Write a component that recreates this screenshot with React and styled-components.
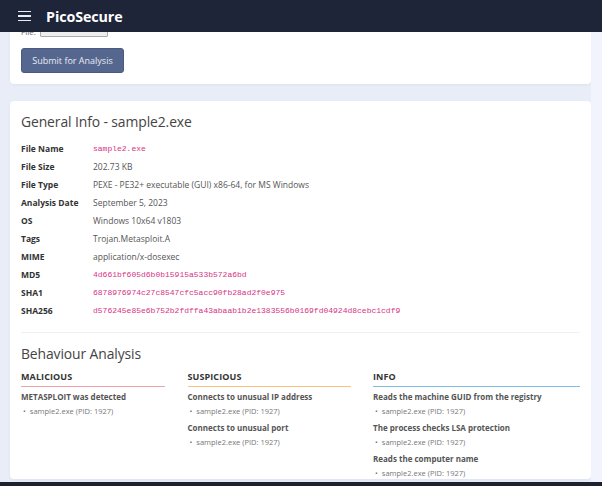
import styled, { createGlobalStyle } from "styled-components";

const GlobalStyle = createGlobalStyle`
  html, body {
    margin: 0;
    padding: 0;
    background: #e9edf7;
    font-family: "Open Sans", "Noto Sans", sans-serif;
    color: #444;
    overflow: hidden;
  }
`;

// header
const TopBar = styled.header`
  position: fixed;
  top: 0;
  left: 0;
  right: 0;
  height: 32px;
  display: flex;
  align-items: center;
  background: #1e2539;
  color: #fff;
  z-index: 10;
`;

const Burger = styled.button`
  display: flex;
  flex-direction: column;
  justify-content: space-between;
  width: 13px;
  height: 11px;
  margin: 0 15px 0 18px;
  padding: 0;
  border: none;
  background: none;

  span {
    display: block;
    height: 1.3px;
    background: #e9ecf2;
  }
`;

const Brand = styled.div`
  font-size: 14.3px;
  font-weight: 700;
  letter-spacing: -0.1px;
`;

const BottomBar = styled.div`
  position: fixed;
  left: 0;
  right: 0;
  bottom: 0;
  height: 4px;
  background: #1d2130;
  z-index: 10;
`;

// page
const Page = styled.div`
  display: flex;
  height: 486px;
`;

const Main = styled.main`
  flex: 1;
  display: flex;
  flex-direction: column;
  gap: 17px;
  padding: 13px 0 0 10px;
`;

const Track = styled.div`
  width: 11px;
  background: #f1f4fd;
`;

const Card = styled.section`
  background: #fff;
  border-radius: 4px;
  box-shadow: 0 1px 3px rgba(40, 60, 110, 0.06);
  padding: ${(p) => p.pad || "11px"};
`;

const FileRow = styled.div`
  display: flex;
  align-items: center;
  gap: 4px;
  height: 14px;
  font-size: 8px;
  color: #666;
`;

const FakeInput = styled.span`
  display: inline-block;
  width: 66px;
  height: 10px;
  border: 1px solid #aaa;
  background: #eee;
  border-radius: 1px;
`;

const Submit = styled.button`
  margin-top: 10px;
  width: 103px;
  height: 25px;
  border: 1px solid #4a5a80;
  border-radius: 3px;
  background: #56678f;
  color: #e8ecf4;
  font-family: inherit;
  font-size: 9px;
`;

const Title = styled.h2`
  margin: 0;
  font-size: 13.9px;
  font-weight: 400;
  color: #444;
  line-height: 20px;
  letter-spacing: -0.1px;
`;

const InfoTable = styled.div`
  display: grid;
  grid-template-columns: 72px 1fr;
  grid-auto-rows: 18px;
  align-items: center;
  margin-top: 7px;
  padding-bottom: 13px;
  border-bottom: 1px solid #eef0f3;
`;

const Label = styled.div`
  font-size: 8.5px;
  font-weight: 700;
  color: #333;
`;

const Value = styled.div`
  font-size: ${(p) => (p.mono ? "8px" : "8.5px")};
  color: ${(p) => (p.mono ? "#d63384" : "#555")};
  font-family: ${(p) =>
    p.mono ? '"Liberation Mono", "DejaVu Sans Mono", monospace' : "inherit"};
  white-space: nowrap;
`;

const SectionTitle = styled(Title)`
  margin-top: 11px;
`;

const Columns = styled.div`
  display: grid;
  grid-template-columns: 144fr 163fr 207fr;
  column-gap: 22.5px;
  margin-top: 6px;
`;

const Column = styled.div`
  display: flex;
  flex-direction: column;
`;

const ColHead = styled.div`
  font-size: 9px;
  font-weight: 700;
  color: #333;
  letter-spacing: 0.1px;
  padding-bottom: 2px;
  border-bottom: 1.5px solid ${(p) => p.color};
  line-height: 14px;
`;

const Finding = styled.div`
  font-size: 8px;
  font-weight: 700;
  color: #555;
  margin-top: ${(p) => (p.first ? "4px" : "5px")};
  line-height: 12px;
`;

const Proc = styled.div`
  font-size: 7.5px;
  color: #777;
  margin-top: 2px;
  line-height: 12px;

  &::before {
    content: "•";
    margin: 0 4px 0 2px;
  }
`;

const info = [
  ["File Name", "sample2.exe", true],
  ["File Size", "202.73 KB"],
  ["File Type", "PEXE - PE32+ executable (GUI) x86-64, for MS Windows"],
  ["Analysis Date", "September 5, 2023"],
  ["OS", "Windows 10x64 v1803"],
  ["Tags", "Trojan.Metasploit.A"],
  ["MIME", "application/x-dosexec"],
  ["MD5", "4d661bf605d6b0b15915a533b572a6bd", true],
  ["SHA1", "6878976974c27c8547cfc5acc90fb28ad2f0e975", true],
  [
    "SHA256",
    "d576245e85e6b752b2fdffa43abaab1b2e1383556b0169fd04924d8cebc1cdf9",
    true,
  ],
];

const behaviour = [
  { name: "MALICIOUS", color: "#f0a3a3", items: ["METASPLOIT was detected"] },
  {
    name: "SUSPICIOUS",
    color: "#f7c27e",
    items: ["Connects to unusual IP address", "Connects to unusual port"],
  },
  {
    name: "INFO",
    color: "#7fbde6",
    items: [
      "Reads the machine GUID from the registry",
      "The process checks LSA protection",
      "Reads the computer name",
    ],
  },
];

const App = () => {
  return (
    <>
      <GlobalStyle />
      <TopBar>
        <Burger aria-label="menu">
          <span />
          <span />
          <span />
        </Burger>
        <Brand>PicoSecure</Brand>
      </TopBar>
      <Page>
        <Main>
          <Card>
            <FileRow>
              File: <FakeInput />
            </FileRow>
            <Submit>Submit for Analysis</Submit>
          </Card>
          <Card pad="11px 11px 0">
            <Title>General Info - sample2.exe</Title>
            <InfoTable>
              {info.map(([k, v, mono]) => (
                <>
                  <Label key={k}>{k}</Label>
                  <Value key={k + "v"} mono={mono}>
                    {v}
                  </Value>
                </>
              ))}
            </InfoTable>
            <SectionTitle>Behaviour Analysis</SectionTitle>
            <Columns>
              {behaviour.map((b) => (
                <Column key={b.name}>
                  <ColHead color={b.color}>{b.name}</ColHead>
                  {b.items.map((it, i) => (
                    <div key={it}>
                      <Finding first={i === 0}>{it}</Finding>
                      <Proc>sample2.exe (PID: 1927)</Proc>
                    </div>
                  ))}
                </Column>
              ))}
            </Columns>
          </Card>
        </Main>
        <Track />
      </Page>
      <BottomBar />
    </>
  );
};

export default App;
